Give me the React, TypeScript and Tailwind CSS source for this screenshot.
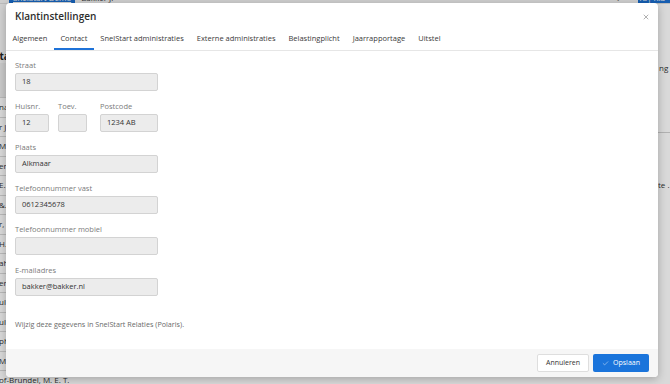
import { X, Check } from "lucide-react";

const rows = [
  "na", "r J.", "Ma", "er, P.", "E. T.", "&. Zn", "r, A.", "H.", "ah", "er",
  "ul", "ul", "ph", "M.", "of-Brundel, M. E. T.",
];

const tabs = [
  "Algemeen",
  "Contact",
  "SnelStart administraties",
  "Externe administraties",
  "Belastingplicht",
  "Jaarrapportage",
  "Uitstel",
];

function Field({ label, value, width }: { label: string; value?: string; width: string }) {
  return (
    <div className="flex flex-col">
      <label className="h-[11px] leading-[11px] text-[7.5px] text-[#7b7b7b] mb-[2px]">{label}</label>
      <div
        className={`${width} h-[18px] flex items-center px-[6px] bg-[#ececec] border border-[#d3d3d3] rounded-[2px] text-[7.5px] text-[#333]`}
      >
        {value}
      </div>
    </div>
  );
}

export default function App() {
  return (
    <div className="relative w-[670px] h-[384px] overflow-hidden bg-white font-['Open_Sans',sans-serif]">
      {/* Page behind the dialog */}
      <div className="flex flex-col h-full">
        <div className="h-[12px] mt-[-8px] flex items-center bg-[#f4f4f4] border-b border-[#ddd] text-[8px]">
          <div className="ml-[9px] px-[4px] h-full flex items-center bg-[#1b6fd1] text-white underline">SnelStart Demo</div>
          <div className="ml-[6px] text-[#333]">Bakker J.</div>
          <div className="ml-auto mr-[4px] text-[#555]">⌃</div>
          <div className="mr-[18px] text-[#555]">↓</div>
          <div className="w-[32px] h-full flex items-center bg-[#1b6fd1] text-white">18| Kla</div>
        </div>
        <div className="flex flex-1">
          <div className="w-[220px] flex flex-col bg-[#f6f6f6]">
            <div className="h-[45px]" />
            <div className="h-[14px] flex items-center text-[10px] font-bold text-[#222] ml-[-6px]">Stat</div>
            <div className="h-[35px] bg-[#ededed] border-b border-[#d9d9d9]" />
            {rows.map((r, i) => (
              <div
                key={i}
                className="h-[19.5px] shrink-0 flex items-center border-b border-[#d9d9d9] text-[8px] text-[#333] whitespace-nowrap ml-[-1px] bg-white"
              >
                {r}
              </div>
            ))}
          </div>
          <div className="flex-1" />
          <div className="w-[14px] flex flex-col text-[8px] text-[#333] whitespace-nowrap overflow-hidden bg-white">
            <div className="h-[57px] shrink-0" />
            <div className="h-[14px] leading-[14px] pl-[3px]">ng</div>
            <div className="h-[58px] shrink-0 border-b border-[#d0d0d0]" />
            <div className="h-[45px] shrink-0" />
            <div className="h-[14px] leading-[14px] pl-[2px]">te .</div>
          </div>
        </div>
      </div>

      {/* Overlay */}
      <div className="absolute inset-0 bg-black/15" />

      {/* Dialog */}
      <div className="absolute left-[6px] top-[3px] w-[652px] h-[374px] flex flex-col bg-white rounded-[4px] shadow-[0_2px_8px_rgba(0,0,0,0.25)] overflow-hidden">
        <div className="h-[27px] flex items-center justify-between pl-[9px] pr-[8px]">
          <h2 className="text-[10px] font-semibold text-[#2d2d2d]">Klantinstellingen</h2>
          <X className="w-[8px] h-[8px] text-[#8a8a8a]" strokeWidth={2} />
        </div>
        <div className="h-[21px] flex items-stretch border-b border-[#e6e6e6]">
          {tabs.map((t) => (
            <div
              key={t}
              className={`px-[6.5px] flex items-center text-[7.5px] text-[#3a3a3a] border-b-2 ${
                t === "Contact" ? "border-[#1e72d8]" : "border-transparent"
              }`}
            >
              {t}
            </div>
          ))}
        </div>

        <div className="flex-1 flex flex-col pl-[9px] pt-[9px]">
          <div className="flex flex-col gap-[10px]">
            <Field label="Straat" value="18" width="w-[143px]" />
            <div className="flex">
              <div className="mr-[9px]">
                <Field label="Huisnr." value="12" width="w-[34px]" />
              </div>
              <div className="mr-[13px]">
                <Field label="Toev." width="w-[29px]" />
              </div>
              <Field label="Postcode" value="1234 AB" width="w-[58px]" />
            </div>
            <Field label="Plaats" value="Alkmaar" width="w-[143px]" />
            <Field label="Telefoonnummer vast" value="0612345678" width="w-[143px]" />
            <Field label="Telefoonnummer mobiel" width="w-[143px]" />
            <Field label="E-mailadres" value="bakker@bakker.nl" width="w-[143px]" />
          </div>
          <p className="mt-[23px] text-[7.2px] text-[#6a6a6a]">Wijzig deze gegevens in SnelStart Relaties (Polaris).</p>
        </div>

        <div className="h-[28px] flex items-center justify-end gap-[4px] pr-[9px] bg-[#f6f6f6]">
          <button className="h-[18px] w-[52px] flex items-center justify-center bg-white border border-[#dedede] rounded-[2px] text-[7px] text-[#333]">
            Annuleren
          </button>
          <button className="h-[18px] w-[56px] flex items-center justify-center gap-[4px] bg-[#1a74db] rounded-[2px] text-[7px] text-white">
            <Check className="w-[7px] h-[7px]" strokeWidth={1.5} />
            Opslaan
          </button>
        </div>
      </div>
    </div>
  );
}
